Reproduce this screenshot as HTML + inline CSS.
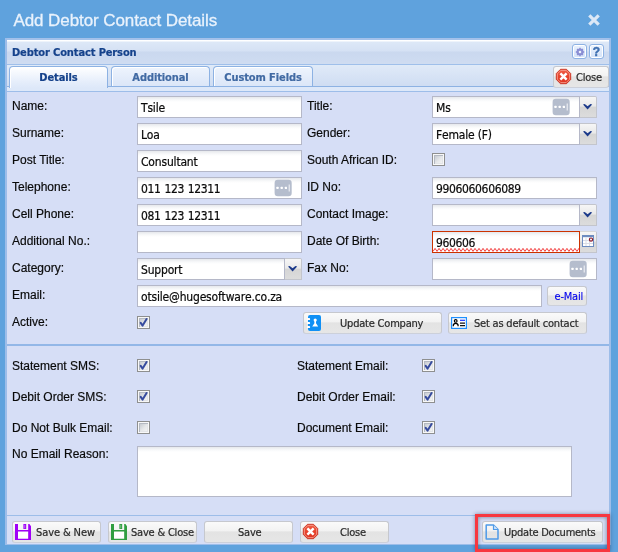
<!DOCTYPE html>
<html>
<head>
<meta charset="utf-8">
<title>Add Debtor Contact Details</title>
<style>
html,body{margin:0;padding:0;}
body{width:618px;height:552px;overflow:hidden;background:#5fa2dd;position:relative;font-family:"Liberation Sans",sans-serif;}
#wrap{position:absolute;left:0;top:0;width:618px;height:552px;will-change:transform;}
.abs{position:absolute;}
svg{position:absolute;overflow:visible;}
#title{position:absolute;left:13.5px;top:8.5px;font-size:17px;line-height:24px;color:#e9f2fc;white-space:nowrap;letter-spacing:-0.09px;-webkit-text-stroke:0.3px #e9f2fc;}
#panel{position:absolute;left:5px;top:38px;width:606px;height:507px;background:#d6def6;}
#pb{position:absolute;left:5px;top:38px;width:606px;height:507px;box-sizing:border-box;border:2px solid #9dbde9;border-top:none;border-bottom-width:1px;}
#phead{position:absolute;left:5px;top:38px;width:606px;height:27px;box-sizing:border-box;border:2px solid #a3c1ea;border-bottom:1px solid #9fbfea;
 background:linear-gradient(#ffffff 0,#ffffff 1px,#dde8f7 2px,#d5e1f4 11px,#cad8ef 12px,#cfdcf1 100%);}
#phead span{position:absolute;left:5px;top:5px;font:bold 11px/15px "DejaVu Sans Condensed","Liberation Sans",sans-serif;color:#15428b;white-space:nowrap;letter-spacing:-0.12px;-webkit-text-stroke:0.2px #15428b;}
.tool{position:absolute;top:44px;width:15px;height:15px;box-sizing:border-box;border:1px solid #8db2e3;border-radius:3px;background:linear-gradient(#eaf2fd,#d3e2f8);box-shadow:inset 0 0 0 1px #fff;}
#tabstrip{position:absolute;left:7px;top:65px;width:602px;height:22px;background:linear-gradient(#e0eaf8,#cedcf2);}
#spacer{position:absolute;left:7px;top:86px;width:602px;height:4px;background:#dde8f9;border-top:1px solid #8db2e3;border-bottom:1px solid #9dbde9;}
.tab{position:absolute;top:66px;height:20px;box-sizing:border-box;border:1px solid #8db2e3;border-bottom:none;border-radius:4px 4px 0 0;
 background:linear-gradient(#eef4fd,#dbe6f8);text-align:center;font:bold 11px/21px "DejaVu Sans Condensed","Liberation Sans",sans-serif;color:#416aa3;box-shadow:inset 1px 1px 0 #fff;letter-spacing:-0.1px;-webkit-text-stroke:0.2px;}
.tab.act{height:22px;background:linear-gradient(#ffffff,#e6eefb 70%,#dde8f9);color:#15428b;z-index:2;}
.lbl{position:absolute;font-size:12px;line-height:14px;color:#0a0a0a;white-space:nowrap;-webkit-text-stroke:0.18px #0a0a0a;}
.inp{position:absolute;margin-top:-1px;height:22px;box-sizing:border-box;border:1px solid #b5b8c8;background:linear-gradient(#e6e8ec 0,#f8f9fa 3px,#fff 5px);
 font:12px/19px "DejaVu Sans Condensed","Liberation Sans",sans-serif;color:#0a0a0a;-webkit-text-stroke:0.2px #0a0a0a;padding:2px 0 0 3px;white-space:nowrap;overflow:hidden;letter-spacing:-0.18px;font-kerning:none;}
.inp.num{letter-spacing:-0.35px;word-spacing:0.75px;}
.trg{position:absolute;margin-top:-1px;width:17px;height:22px;box-sizing:border-box;border:1px solid #c3c5cc;border-left:none;border-radius:0 2px 0 0;
 background:linear-gradient(#f6f6f6 0,#e9e9e9 46%,#d5d5d5 50%,#dcdcdc 100%);}
.dots{position:absolute;width:16px;height:16px;border-radius:3px;background:#b4bccc;}
.cb{position:absolute;width:13px;height:13px;box-sizing:border-box;border:1px solid #8e8f8f;background:linear-gradient(135deg,#c9cdd3 20%,#e6e8ea 55%,#f4f4f4 85%);box-shadow:inset 0 0 0 1px #f8f8f8, inset 2px 2px 0 0 #b4b9c2, inset -2px -2px 0 0 #e3e5e8;}
.btn{position:absolute;height:22px;box-sizing:border-box;border:1px solid #c6c8ce;border-bottom-color:#ccd0da;border-radius:3px;
 background:linear-gradient(#fafafa 0,#f2f2f2 45%,#e3e3e3 49%,#e6e6e6 100%);font:11px/19px "DejaVu Sans Condensed","Liberation Sans",sans-serif;color:#2a2a2a;white-space:nowrap;letter-spacing:-0.2px;-webkit-text-stroke:0.2px;}
.btn span{position:absolute;top:1px;}
</style>
</head>
<body>
<div id="wrap">
<div id="title">Add Debtor Contact Details</div>
<svg style="left:587px;top:13px" width="14" height="14" viewBox="0 0 14 14"><path d="M2.3 2.3 L11.7 11.7 M11.7 2.3 L2.3 11.7" stroke="#dce8f6" stroke-width="3.2"/></svg>
<div id="panel"></div>
<div id="phead"><span>Debtor Contact Person</span></div>
<div class="tool" style="left:572px"><svg style="left:1.5px;top:1.5px" width="10" height="10" viewBox="-5.5 -5.5 11 11"><circle r="2.9" fill="none" stroke="#8a8fd4" stroke-width="1.9"/><g stroke="#8a8fd4" stroke-width="1.6"><path d="M0 -4.6V4.6M-4.6 0H4.6M-3.2 -3.2L3.2 3.2M3.2 -3.2L-3.2 3.2"/></g><circle r="1.4" fill="#eef2fc"/></svg></div>
<div class="tool" style="left:589px"><span style="position:absolute;left:0;top:0;width:13px;text-align:center;font:bold 12px/14px 'Liberation Sans',sans-serif;color:#3e6fb0;-webkit-text-stroke:0.4px #3e6fb0;">?</span></div>
<div id="tabstrip"></div>
<div id="spacer"></div>
<div class="tab act" style="left:9px;width:99px;">Details</div>
<div class="tab" style="left:111px;width:99px;">Additional</div>
<div class="tab" style="left:213px;width:100px;">Custom Fields</div>
<div class="btn" style="left:553px;top:66px;width:56px;height:22px;"><span style="left:22px;top:1px;">Close</span></div>
<svg style="left:556px;top:69px" width="15" height="15" viewBox="0 0 15 15"><defs><linearGradient id="sg556" x1="0" y1="0" x2="0" y2="1"><stop offset="0" stop-color="#f0614a"/><stop offset=".5" stop-color="#e8432c"/><stop offset="1" stop-color="#dd3320"/></linearGradient></defs><path d="M4.5 .3 H10.5 L14.7 4.5 V10.5 L10.5 14.7 H4.5 L.3 10.5 V4.5 Z" fill="url(#sg556)" stroke="#c8301f" stroke-width=".9"/><path d="M4.8 1.4 H10.2 L13.6 4.8 V10.2 L10.2 13.6 H4.8 L1.4 10.2 V4.8 Z" fill="none" stroke="#f6a596" stroke-width=".8"/><path d="M4.4 4.4 L10.6 10.6 M10.6 4.4 L4.4 10.6" stroke="#fff" stroke-width="2.5"/></svg>
<div class="lbl" style="left:12px;top:99px;">Name:</div>
<div class="lbl" style="left:12px;top:126px;">Surname:</div>
<div class="lbl" style="left:12px;top:153px;">Post Title:</div>
<div class="lbl" style="left:12px;top:180px;">Telephone:</div>
<div class="lbl" style="left:12px;top:207px;">Cell Phone:</div>
<div class="lbl" style="left:12px;top:234px;">Additional No.:</div>
<div class="lbl" style="left:12px;top:261px;">Category:</div>
<div class="lbl" style="left:12px;top:288px;">Email:</div>
<div class="lbl" style="left:12px;top:315px;">Active:</div>
<div class="lbl" style="left:307px;top:99px;">Title:</div>
<div class="lbl" style="left:307px;top:126px;">Gender:</div>
<div class="lbl" style="left:307px;top:153px;">South African ID:</div>
<div class="lbl" style="left:307px;top:180px;">ID No:</div>
<div class="lbl" style="left:307px;top:207px;">Contact Image:</div>
<div class="lbl" style="left:307px;top:234px;">Date Of Birth:</div>
<div class="lbl" style="left:307px;top:261px;">Fax No:</div>
<div class="inp " style="left:137px;top:97px;width:165px;">Tsile</div>
<div class="inp " style="left:137px;top:124px;width:165px;">Loa</div>
<div class="inp " style="left:137px;top:151px;width:165px;">Consultant</div>
<div class="inp num" style="left:137px;top:178px;width:165px;">011 123 12311</div>
<svg style="left:274px;top:179px" width="18" height="18" viewBox="0 0 18 18"><rect x=".6" y=".7" width="17.1" height="16.5" rx="3.2" fill="#b5bdcd"/><rect x="2.4" y="7.8" width="2.2" height="2.2" rx=".5" fill="#fff"/><rect x="6.6" y="7.8" width="2.2" height="2.2" rx=".5" fill="#fff"/><rect x="10.8" y="7.8" width="2.2" height="2.2" rx=".5" fill="#fff"/><rect x="14.7" y="5.5" width="1" height="7" fill="#f4f6f9"/></svg>
<div class="inp num" style="left:137px;top:205px;width:165px;">081 123 12311</div>
<div class="inp " style="left:137px;top:232px;width:165px;"></div>
<div class="inp " style="left:137px;top:259px;width:148px;">Support</div>
<div class="trg" style="left:285px;top:259px"></div><svg style="left:287.7px;top:266.2px" width="9.2" height="5.6" viewBox="0 0 10 6"><path d="M0 .4 L1.9 0 L5 2.5 L8.1 0 L10 .4 L5 5.9 Z" fill="#1c3a8a"/></svg>
<div class="inp " style="left:137px;top:286px;width:405px;">otsile@hugesoftware.co.za</div>
<div class="cb" style="left:137px;top:316px"><svg style="left:-1px;top:-1px" width="13" height="13" viewBox="0 0 13 13"><path d="M3.7 6.9 L5.6 9.6 L9.6 3" fill="none" stroke="#364b9e" stroke-width="2" stroke-linecap="round" stroke-linejoin="round"/></svg></div>
<div class="inp " style="left:432px;top:97px;width:148px;">Ms</div>
<svg style="left:552px;top:98px" width="18" height="18" viewBox="0 0 18 18"><rect x=".6" y=".7" width="17.1" height="16.5" rx="3.2" fill="#b5bdcd"/><rect x="2.4" y="7.8" width="2.2" height="2.2" rx=".5" fill="#fff"/><rect x="6.6" y="7.8" width="2.2" height="2.2" rx=".5" fill="#fff"/><rect x="10.8" y="7.8" width="2.2" height="2.2" rx=".5" fill="#fff"/><rect x="14.7" y="5.5" width="1" height="7" fill="#f4f6f9"/></svg>
<div class="trg" style="left:580px;top:97px"></div><svg style="left:582.7px;top:104.2px" width="9.2" height="5.6" viewBox="0 0 10 6"><path d="M0 .4 L1.9 0 L5 2.5 L8.1 0 L10 .4 L5 5.9 Z" fill="#1c3a8a"/></svg>
<div class="inp " style="left:432px;top:124px;width:148px;">Female (F)</div>
<div class="trg" style="left:580px;top:124px"></div><svg style="left:582.7px;top:131.2px" width="9.2" height="5.6" viewBox="0 0 10 6"><path d="M0 .4 L1.9 0 L5 2.5 L8.1 0 L10 .4 L5 5.9 Z" fill="#1c3a8a"/></svg>
<div class="cb" style="left:432px;top:153px"></div>
<div class="inp num" style="left:432px;top:178px;width:165px;">9906060606089</div>
<div class="inp " style="left:432px;top:205px;width:148px;"></div>
<div class="trg" style="left:580px;top:205px"></div><svg style="left:582.7px;top:212.2px" width="9.2" height="5.6" viewBox="0 0 10 6"><path d="M0 .4 L1.9 0 L5 2.5 L8.1 0 L10 .4 L5 5.9 Z" fill="#1c3a8a"/></svg>
<div class="inp num" style="left:432px;top:232px;width:148px;border-color:#cc3300;">960606</div>
<svg style="left:433px;top:248.4px" width="146" height="3.8" viewBox="0 0 146 3.8"><path d="M0 3.4 L2 0.4 L4 3.4 L6 0.4 L8 3.4 L10 0.4 L12 3.4 L14 0.4 L16 3.4 L18 0.4 L20 3.4 L22 0.4 L24 3.4 L26 0.4 L28 3.4 L30 0.4 L32 3.4 L34 0.4 L36 3.4 L38 0.4 L40 3.4 L42 0.4 L44 3.4 L46 0.4 L48 3.4 L50 0.4 L52 3.4 L54 0.4 L56 3.4 L58 0.4 L60 3.4 L62 0.4 L64 3.4 L66 0.4 L68 3.4 L70 0.4 L72 3.4 L74 0.4 L76 3.4 L78 0.4 L80 3.4 L82 0.4 L84 3.4 L86 0.4 L88 3.4 L90 0.4 L92 3.4 L94 0.4 L96 3.4 L98 0.4 L100 3.4 L102 0.4 L104 3.4 L106 0.4 L108 3.4 L110 0.4 L112 3.4 L114 0.4 L116 3.4 L118 0.4 L120 3.4 L122 0.4 L124 3.4 L126 0.4 L128 3.4 L130 0.4 L132 3.4 L134 0.4 L136 3.4 L138 0.4 L140 3.4 L142 0.4 L144 3.4 L146 0.4 L148 3.4" fill="none" stroke="#f01c1c" stroke-width="0.85"/></svg>
<div class="trg" style="left:580px;top:232px;border-top-color:#d8d8d8"></div>
<svg style="left:582px;top:235px" width="12" height="12" viewBox="0 0 12 12"><rect x=".5" y=".5" width="11" height="11" fill="#fff" stroke="#6d8cc0"/><rect x="0" y="0" width="12" height="2.2" fill="#6d8cc0"/><path d="M4 2.5 V11 M7.5 2.5 V11 M1 5.5 H11 M1 8.5 H11" stroke="#d9dde6" stroke-width="1"/><circle cx="9" cy="4.6" r="1.6" fill="#fff" stroke="#8b1a2b" stroke-width="1.2"/></svg>
<div class="inp " style="left:432px;top:259px;width:165px;"></div>
<svg style="left:569px;top:260px" width="18" height="18" viewBox="0 0 18 18"><rect x=".6" y=".7" width="17.1" height="16.5" rx="3.2" fill="#b5bdcd"/><rect x="2.4" y="7.8" width="2.2" height="2.2" rx=".5" fill="#fff"/><rect x="6.6" y="7.8" width="2.2" height="2.2" rx=".5" fill="#fff"/><rect x="10.8" y="7.8" width="2.2" height="2.2" rx=".5" fill="#fff"/><rect x="14.7" y="5.5" width="1" height="7" fill="#f4f6f9"/></svg>
<div class="btn" style="left:547px;top:286px;width:40px;height:20px;"><span style="left:6.5px;top:-0.5px;color:#0000ee;-webkit-text-stroke:0.1px;">e-Mail</span></div>
<div class="btn" style="left:303px;top:312px;width:139px;"><span style="left:36px;">Update Company</span></div>
<svg style="left:307px;top:315px" width="14" height="16" viewBox="-1 0 14 16"><rect x="0" y="0" width="13" height="16" rx="2" fill="#1090f5"/><rect x="-1" y="2.9" width="3.1" height="2.2" rx=".9" fill="#fff"/><rect x="-1" y="6.9" width="3.1" height="2.2" rx=".9" fill="#fff"/><rect x="-1" y="10.9" width="3.1" height="2.2" rx=".9" fill="#fff"/><circle cx="7.2" cy="5.1" r="1.6" fill="#fff"/><path d="M6.4 6 H8 V8.2 L10.2 11.4 H4.2 L6.4 8.2 Z" fill="#fff"/></svg>
<div class="btn" style="left:448px;top:312px;width:139px;"><span style="left:25px;">Set as default contact</span></div>
<svg style="left:451px;top:317px" width="16" height="12" viewBox="0 0 16 12"><rect x=".6" y=".6" width="14.8" height="10.8" fill="#fff" stroke="#1e8fff" stroke-width="1.2"/><circle cx="4.7" cy="3.9" r="1.35" fill="none" stroke="#000" stroke-width="1.2"/><path d="M2.3 9.3 V8.6 A2.4 2.2 0 0 1 7.1 8.6 V9.3" fill="none" stroke="#000" stroke-width="1.25"/><path d="M9 3.3 H14" stroke="#1a2cff" stroke-width="1.2"/><path d="M9 6.2 H14 M9 8.7 H14" stroke="#111" stroke-width="1.25"/></svg>
<div class="abs" style="left:7px;top:344px;width:602px;height:2px;background:#93b7e7;"></div>
<div class="lbl" style="left:12px;top:359px;">Statement SMS:</div>
<div class="lbl" style="left:12px;top:390px;">Debit Order SMS:</div>
<div class="lbl" style="left:12px;top:421px;">Do Not Bulk Email:</div>
<div class="lbl" style="left:12px;top:447px;">No Email Reason:</div>
<div class="lbl" style="left:297px;top:359px;">Statement Email:</div>
<div class="lbl" style="left:297px;top:390px;">Debit Order Email:</div>
<div class="lbl" style="left:297px;top:421px;">Document Email:</div>
<div class="cb" style="left:137px;top:359px"><svg style="left:-1px;top:-1px" width="13" height="13" viewBox="0 0 13 13"><path d="M3.7 6.9 L5.6 9.6 L9.6 3" fill="none" stroke="#364b9e" stroke-width="2" stroke-linecap="round" stroke-linejoin="round"/></svg></div>
<div class="cb" style="left:137px;top:390px"><svg style="left:-1px;top:-1px" width="13" height="13" viewBox="0 0 13 13"><path d="M3.7 6.9 L5.6 9.6 L9.6 3" fill="none" stroke="#364b9e" stroke-width="2" stroke-linecap="round" stroke-linejoin="round"/></svg></div>
<div class="cb" style="left:137px;top:421px"></div>
<div class="cb" style="left:422px;top:359px"><svg style="left:-1px;top:-1px" width="13" height="13" viewBox="0 0 13 13"><path d="M3.7 6.9 L5.6 9.6 L9.6 3" fill="none" stroke="#364b9e" stroke-width="2" stroke-linecap="round" stroke-linejoin="round"/></svg></div>
<div class="cb" style="left:422px;top:390px"><svg style="left:-1px;top:-1px" width="13" height="13" viewBox="0 0 13 13"><path d="M3.7 6.9 L5.6 9.6 L9.6 3" fill="none" stroke="#364b9e" stroke-width="2" stroke-linecap="round" stroke-linejoin="round"/></svg></div>
<div class="cb" style="left:422px;top:421px"><svg style="left:-1px;top:-1px" width="13" height="13" viewBox="0 0 13 13"><path d="M3.7 6.9 L5.6 9.6 L9.6 3" fill="none" stroke="#364b9e" stroke-width="2" stroke-linecap="round" stroke-linejoin="round"/></svg></div>
<div class="inp " style="left:137px;top:447px;width:435px;height:51px;"></div>
<div class="abs" style="left:7px;top:515px;width:602px;height:1px;background:#9dbde9;"></div>
<div class="btn" style="left:12px;top:521px;width:89px;"><span style="left:23px;letter-spacing:-0.1px">Save &amp; New</span></div>
<svg style="left:15px;top:524px" width="16" height="16" viewBox="0 0 16 16"><rect x="3" y="7.4" width="10.2" height="7.5" fill="#fff"/><path d="M0 0 H3 V5.9 H13.2 V0 H14.4 L16 2.3 V16 H0 Z M3 7.5 V14.8 H13.2 V7.5 Z" fill="#a000f8" fill-rule="evenodd"/><rect x="8.4" y="0" width="2.8" height="5" fill="#a000f8"/><rect x="9.3" y=".9" width=".9" height="3.4" fill="#c46cf9"/></svg>
<div class="btn" style="left:108px;top:521px;width:89px;"><span style="left:22px;">Save &amp; Close</span></div>
<svg style="left:111px;top:524px" width="16" height="16" viewBox="0 0 16 16"><rect x="3" y="7.4" width="10.2" height="7.5" fill="#fff"/><path d="M0 0 H3 V5.9 H13.2 V0 H14.4 L16 2.3 V16 H0 Z M3 7.5 V14.8 H13.2 V7.5 Z" fill="#2f9e40" fill-rule="evenodd"/><rect x="8.4" y="0" width="2.8" height="5" fill="#2f9e40"/><rect x="9.3" y=".9" width=".9" height="3.4" fill="#7cc487"/></svg>
<div class="btn" style="left:204px;top:521px;width:89px;"><span style="left:33px;">Save</span></div>
<div class="btn" style="left:300px;top:521px;width:89px;"><span style="left:39px;">Close</span></div>
<svg style="left:303px;top:524px" width="15" height="15" viewBox="0 0 15 15"><defs><linearGradient id="sg303" x1="0" y1="0" x2="0" y2="1"><stop offset="0" stop-color="#f0614a"/><stop offset=".5" stop-color="#e8432c"/><stop offset="1" stop-color="#dd3320"/></linearGradient></defs><path d="M4.5 .3 H10.5 L14.7 4.5 V10.5 L10.5 14.7 H4.5 L.3 10.5 V4.5 Z" fill="url(#sg303)" stroke="#c8301f" stroke-width=".9"/><path d="M4.8 1.4 H10.2 L13.6 4.8 V10.2 L10.2 13.6 H4.8 L1.4 10.2 V4.8 Z" fill="none" stroke="#f6a596" stroke-width=".8"/><path d="M4.4 4.4 L10.6 10.6 M10.6 4.4 L4.4 10.6" stroke="#fff" stroke-width="2.5"/></svg>
<div class="btn" style="left:482px;top:521px;width:121px;"><span style="left:21px;letter-spacing:-0.25px">Update Documents</span></div>
<svg style="left:485px;top:524px" width="14" height="16" viewBox="0 0 14 16"><path d="M1.2 1 H8.5 L13 5.5 V15 H1.2 Z" fill="none" stroke="#4f9be8" stroke-width="1.5" stroke-linejoin="round"/><path d="M8.5 1 V5.5 H13" fill="#cfe3fa" stroke="#4f9be8" stroke-width="1.2" stroke-linejoin="round"/></svg>
<div id="pb"></div>
<div class="abs" style="left:475px;top:514px;width:135px;height:38px;box-sizing:border-box;border:3px solid #f7373f;box-shadow:inset 0 0 4px rgba(40,40,60,.55),0 0 4px rgba(20,30,60,.45);"></div>
</div>
</body>
</html>
